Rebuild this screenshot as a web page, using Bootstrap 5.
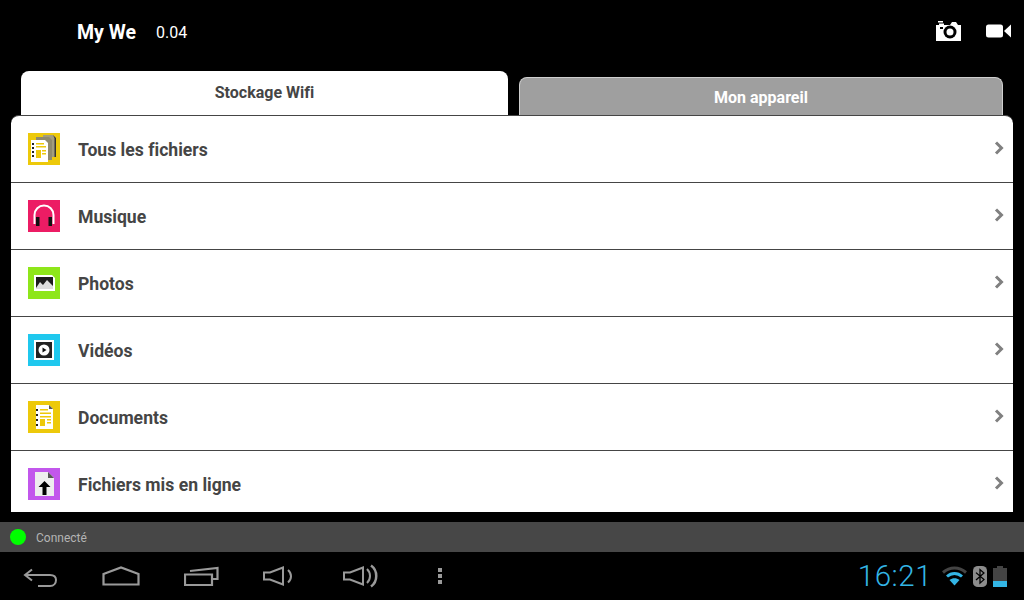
<!DOCTYPE html>
<html lang="fr">
<head>
  <meta charset="UTF-8" />
  <meta name="viewport" content="width=device-width, initial-scale=1" />
  <title>My We</title>
  <link href="https://cdn.jsdelivr.net/npm/bootstrap@5.3.0/dist/css/bootstrap.min.css" rel="stylesheet" />
  <style>
    html, body { height: 600px; overflow: hidden; background: #000; font-family: Roboto, "Liberation Sans", sans-serif; font-variant-ligatures: none; }
    .top-bar { height: 71px; padding: 0 13px 7px 77px; color: #fff; }
    .app-name { font-size: 19.5px; font-weight: 700; width: 79px; margin-top: 2px; }
    .app-version { font-size: 16px; margin-top: 2px; }
    .top-icons { gap: 25px; margin-top: -3px; }
    .tab-row { height: 44px; padding-left: 21px; padding-right: 21px; gap: 11px; }
    .tab-item { font-weight: 700; font-size: 16px; border-radius: 8px 8px 0 0; }
    .tab-on { width: 487px; height: 44px; background: #fff; color: #454545; padding-top: 10px; }
    .tab-off { width: 484px; height: 38px; background: #9f9f9f; color: #fff; border: 1px solid #cfcfcf; border-bottom: 0; padding-top: 8px; }
    .file-panel { height: 397px; margin: 0 11px; background: #fff; border-top: 1.500px solid #454545; border-radius: 8px 8px 0 0; overflow: hidden; }
    .file-row { height: 67px; padding-left: 17px; padding-right: 9px; border-bottom: 1px solid #454545; color: #454545; font-size: 17.600px; font-weight: 700; flex: none; }
    .file-row span { margin-left: 18px; margin-top: 2px; }
    .row-chevron { margin-left: auto; margin-top: -2px; }
    .panel-gap { height: 10px; }
    .status-line { height: 30px; background: #474747; color: #b4b4b4; font-size: 12px; padding-left: 10px; }
    .status-dot { width: 16px; height: 16px; border-radius: 50%; background: #0f0; margin-right: 10px; }
    .status-text { margin-top: 2px; }
    .sys-bar { height: 48px; padding-left: 23px; padding-right: 17px; }
    .nav-keys svg { flex: none; }
    .key-home { margin-left: 43px; }
    .key-recent { margin-left: 44px; }
    .key-vol-down { margin-left: 44px; }
    .key-vol-up { margin-left: 48px; }
    .key-menu { margin-left: 58px; }
    .sys-clock { font-size: 29.500px; color: #33b5e5; font-weight: 300; letter-spacing: .5px; margin-left: auto; margin-right: 9px; }
    .sys-bt { margin-left: 5px; }
    .sys-batt { margin-left: 6px; }
  </style>
</head>
<body>
  <div class="top-bar d-flex align-items-center">
    <div class="app-name">My We</div>
    <div class="app-version">0.04</div>
    <div class="top-icons d-flex align-items-center ms-auto">
      <svg width="25" height="20" viewBox="0 0 25 20"><path fill="#fff" d="M0 4h3V2.500h5V4h6l2-3h4l2 3h3v16H0z"/><circle cx="14" cy="11" r="6.500" fill="#000"/><circle cx="14" cy="11" r="3.500" fill="#fff"/><rect x="4" y="6" width="3" height="2" fill="#000"/><rect x="2" y="0" width="5" height="1.500" fill="#fff"/></svg>
      <svg width="25" height="14" viewBox="0 0 25 14"><rect width="17" height="13" y=".5" rx="2.500" fill="#fff"/><path fill="#fff" d="M18 7l7-6.500v13z"/></svg>
    </div>
  </div>

  <div class="tab-row d-flex align-items-end">
    <div class="tab-item tab-on text-center">Stockage Wifi</div>
    <div class="tab-item tab-off text-center">Mon appareil</div>
  </div>

  <div class="file-panel d-flex flex-column">
    <div class="file-row d-flex align-items-center">
      <svg width="32" height="32" viewBox="0 0 32 32"><rect width="32" height="32" fill="#edc90a"/><path fill="#a39d7e" d="M15 2h10l3 3v19H15z"/><path fill="#333" d="M25 2l3 3v19h-1.500V5z"/><path fill="#8f8a6e" d="M8 4h13l3 3v20H8z"/><path fill="#fff" d="M3 7h14l3 3v19H3z"/><path fill="#222" d="M4 10h2v2H4zm0 4h2v2H4zm0 4h2v2H4zm0 4h2v2H4z"/><path fill="#edc90a" d="M8 10h8v1.500H8zm0 3h10v1.500H8zM8 17h5v8H8zm6 0h4v1.500h-4zm0 3h4v1.500h-4z"/></svg>
      <span>Tous les fichiers</span>
      <svg class="row-chevron" width="10" height="14" viewBox="0 0 10 14"><path fill="none" stroke="#808080" stroke-width="3" d="M2 1.500L7.500 7 2 12.500"/></svg>
    </div>
    <div class="file-row d-flex align-items-center">
      <svg width="32" height="32" viewBox="0 0 32 32"><rect width="32" height="32" fill="#ec1c64"/><path fill="none" stroke="#fff" stroke-width="2" d="M6.500 24V15a9.500 9.500 0 0 1 19 0v9"/><rect x="8" y="17" width="3.500" height="9" fill="#111"/><rect x="20.500" y="17" width="3.500" height="9" fill="#111"/></svg>
      <span>Musique</span>
      <svg class="row-chevron" width="10" height="14" viewBox="0 0 10 14"><path fill="none" stroke="#808080" stroke-width="3" d="M2 1.500L7.500 7 2 12.500"/></svg>
    </div>
    <div class="file-row d-flex align-items-center">
      <svg width="32" height="32" viewBox="0 0 32 32"><rect width="32" height="32" fill="#8ee61a"/><path fill="#fff" d="M6 8h18l3 3v13H6z"/><rect x="8" y="10" width="17" height="12" fill="#1c1c1c"/><path fill="#ddd" d="M8 21l4-6 3 3 4-5 6 6v3H8z"/></svg>
      <span>Photos</span>
      <svg class="row-chevron" width="10" height="14" viewBox="0 0 10 14"><path fill="none" stroke="#808080" stroke-width="3" d="M2 1.500L7.500 7 2 12.500"/></svg>
    </div>
    <div class="file-row d-flex align-items-center">
      <svg width="32" height="32" viewBox="0 0 32 32"><rect width="32" height="32" fill="#1fc8ee"/><rect x="6" y="6" width="20" height="20" fill="#fff"/><rect x="8" y="8" width="16" height="16" fill="#222"/><circle cx="16" cy="16" r="5.500" fill="#fff"/><path fill="#111" d="M14.500 13.500l4 2.500-4 2.500z"/></svg>
      <span>Vidéos</span>
      <svg class="row-chevron" width="10" height="14" viewBox="0 0 10 14"><path fill="none" stroke="#808080" stroke-width="3" d="M2 1.500L7.500 7 2 12.500"/></svg>
    </div>
    <div class="file-row d-flex align-items-center">
      <svg width="32" height="32" viewBox="0 0 32 32"><rect width="32" height="32" fill="#edc90a"/><path fill="#fff" d="M8 4h13l4 4v20H8z"/><path fill="#555" d="M21 4l4 4h-4z"/><path fill="#222" d="M8 8h2v2H8zm0 5h2v2H8zm0 5h2v2H8zm0 5h2v2H8z"/><path fill="#edc90a" d="M12 8h8v1.500h-8zm0 3.500h11V13H12zM12 15h11v1.500H12zm0 3h5v7h-5zm7 0h4v1.500h-4zm0 3h4v1.500h-4z"/></svg>
      <span>Documents</span>
      <svg class="row-chevron" width="10" height="14" viewBox="0 0 10 14"><path fill="none" stroke="#808080" stroke-width="3" d="M2 1.500L7.500 7 2 12.500"/></svg>
    </div>
    <div class="file-row d-flex align-items-center">
      <svg width="32" height="32" viewBox="0 0 32 32"><rect width="32" height="32" fill="#c257ec"/><path fill="#eee" d="M7 4h13l6 6v18H7z"/><path fill="#555" d="M20 4l6 6h-6z"/><path fill="#000" d="M16.500 13l6 6h-4v8h-4v-8h-4z"/></svg>
      <span>Fichiers mis en ligne</span>
      <svg class="row-chevron" width="10" height="14" viewBox="0 0 10 14"><path fill="none" stroke="#808080" stroke-width="3" d="M2 1.500L7.500 7 2 12.500"/></svg>
    </div>
  </div>

  <div class="panel-gap"></div>

  <div class="status-line d-flex align-items-center">
    <div class="status-dot"></div>
    <div class="status-text">Connecté</div>
  </div>

  <div class="sys-bar d-flex align-items-center">
    <div class="nav-keys d-flex align-items-center">
      <svg width="36" height="22" viewBox="0 -3 36 22"><path fill="none" stroke="#9a9a9a" stroke-width="2" d="M3 7h24c4 0 6 2 6 5s-2 6-6 6H15M9 1.500L2 7l7 5.500"/></svg>
      <svg class="key-home" width="38" height="22" viewBox="0 -1 38 22"><path fill="none" stroke="#9a9a9a" stroke-width="2.200" d="M1.500 8L19 1.500 36.500 8v10.500h-35z"/></svg>
      <svg class="key-recent" width="35" height="22" viewBox="0 -1 35 22"><path fill="none" stroke="#9a9a9a" stroke-width="2.200" d="M1 8.500h27v10.500H1zM6 5L33.500 2v11h-5"/></svg>
      <svg class="key-vol-down" width="32" height="20" viewBox="0 0 32 20"><path fill="none" stroke="#9a9a9a" stroke-width="2" d="M1 6.500h6L20 1.500v17L7 13.500H1zM25 4c4 3.500 4 9 0 12.500"/></svg>
      <svg class="key-vol-up" width="36" height="24" viewBox="0 0 36 24"><path fill="none" stroke="#9a9a9a" stroke-width="2" d="M1 8.500h6L20 3.500v17L7 15.500H1zM24 5c4 4 4 10 0 14"/><path fill="none" stroke="#9a9a9a" stroke-width="2.500" d="M28 1.500c7 5 7 16 0 21"/></svg>
      <svg class="key-menu" width="6" height="18" viewBox="0 0 6 18"><path fill="#9a9a9a" d="M1 1h4v4H1zm0 6h4v4H1zm0 6h4v4H1z"/></svg>
    </div>
    <div class="sys-clock">16:21</div>
    <svg width="27" height="20" viewBox="0 0 27 20"><path fill="none" stroke="#444" stroke-width="3" d="M2 6.500c7-6 16-6 23 0"/><path fill="none" stroke="#33b5e5" stroke-width="3" d="M6 10.500c4.500-4 10.500-4 15 0"/><path fill="#33b5e5" d="M13.500 19.500L8.500 14c3-2.500 7-2.500 10 0z"/></svg>
    <svg class="sys-bt" width="14" height="21" viewBox="0 0 14 24" preserveAspectRatio="none"><rect width="14" height="24" rx="5" fill="#8c8c8c"/><path fill="none" stroke="#000" stroke-width="1.300" d="M3 7.500l8 8-4 4V4l4 4-8 8"/></svg>
    <svg class="sys-batt" width="14" height="21" viewBox="0 0 14 21"><path fill="#444" d="M4 0h6v2h4v19H0V2h4z"/><rect y="15" width="14" height="6" fill="#33b5e5"/></svg>
  </div>
  <script src="https://cdn.jsdelivr.net/npm/bootstrap@5.3.0/dist/js/bootstrap.bundle.min.js"></script>
</body>
</html>
